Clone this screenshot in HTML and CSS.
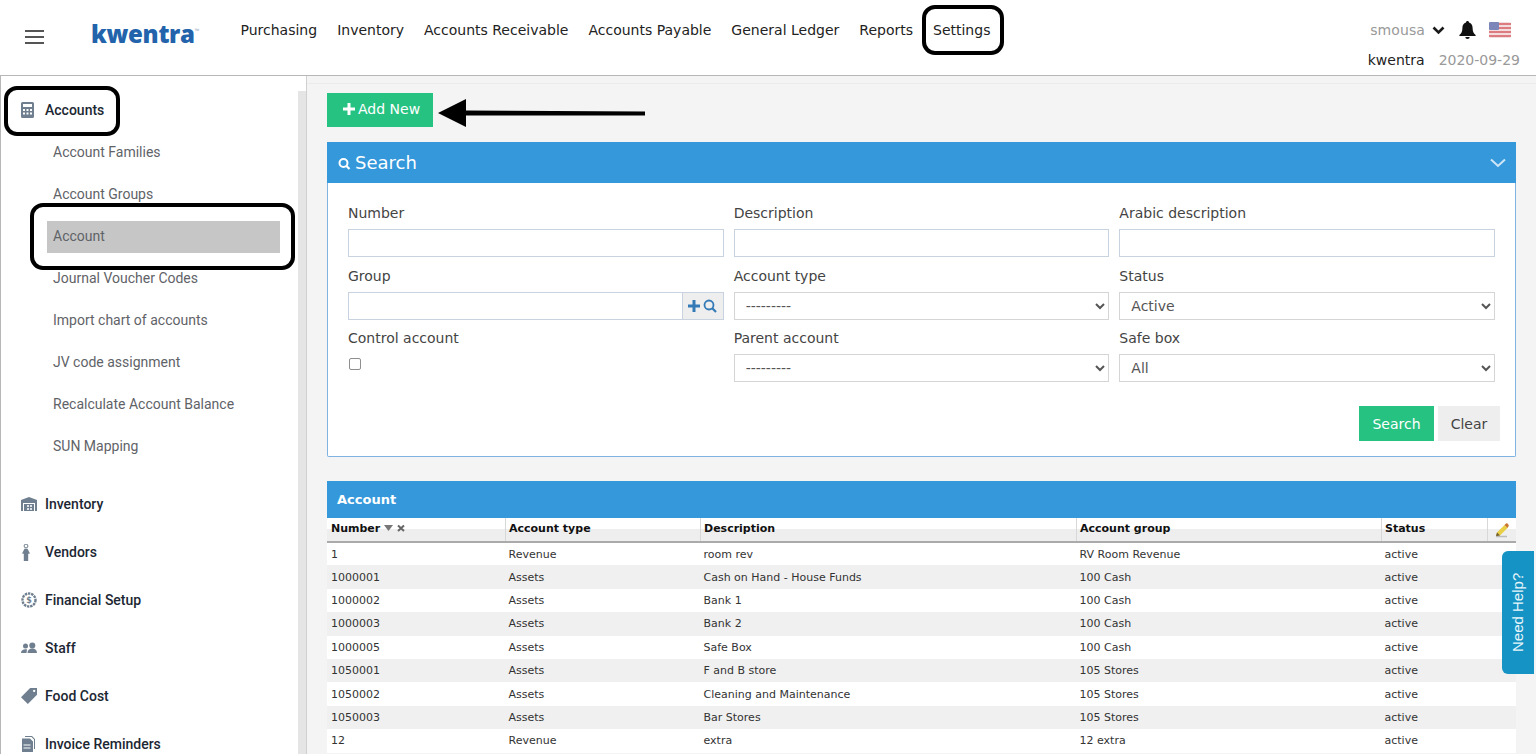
FILE: index.html
```html
<!DOCTYPE html>
<html lang="en">
<head>
    <meta charset="UTF-8">
    <title>Accounts</title>
    <link rel="stylesheet" href="styles.css">
</head>
<body>
    <!-- Top bar -->
    <header class="topbar">
        <div class="burger"><span></span><span></span><span></span></div>
        <div class="logo">kwentra<small>™</small></div>
        <nav class="topnav">
            <a>Purchasing</a>
            <a>Inventory</a>
            <a>Accounts Receivable</a>
            <a>Accounts Payable</a>
            <a>General Ledger</a>
            <a>Reports</a>
            <a>Settings</a>
        </nav>
        <div class="user">
            <div class="user-row">
                <span class="user-name">smousa</span>
                <svg class="user-caret" width="13" height="9" viewBox="0 0 13 9"><path d="M1.500 1.500 6.500 6.500 11.500 1.500" fill="none" stroke="#1a1a1a" stroke-width="2.600"/></svg>
                <svg class="user-bell" width="17" height="18" viewBox="0 0 17 18"><path d="M8.500 0C7.600 0 7 .6 7 1.500 4.600 2.200 3.400 4.200 3.400 7c0 3.500-1 5.300-3 7v1h16.200v-1c-2-1.700-3-3.500-3-7 0-2.800-1.200-4.800-3.600-5.500C10 .6 9.400 0 8.500 0ZM6.300 16a2.200 2 0 0 0 4.400 0Z" fill="#111"/></svg>
                <svg class="user-flag" width="22" height="16" viewBox="0 0 22 16">
                    <rect width="22" height="16" rx="2" fill="#f3dcdc"/>
                    <path d="M0 2h22M0 6h22M0 10h22M0 14h22" stroke="#dd7c80" stroke-width="1.800"/>
                    <rect width="10" height="8" rx="1" fill="#7d86b8"/>
                </svg>
            </div>
            <div class="user-row user-row-second">
                <span class="user-org">kwentra</span>
                <span class="user-date">2020-09-29</span>
            </div>
        </div>
    </header>

    <div class="layout">
        <!-- Left menu -->
        <aside class="sidebar">
            <div class="menu">
                <div class="menu-head">
                    <svg class="menu-icon" width="13" height="16" viewBox="0 0 13 16" preserveAspectRatio="xMinYMid"><path fill-rule="evenodd" d="M1.500 0h10A1.500 1.500 0 0 1 13 1.500v13a1.500 1.500 0 0 1-1.500 1.500h-10A1.500 1.500 0 0 1 0 14.500v-13A1.500 1.500 0 0 1 1.500 0ZM2 2v3h9V2ZM2 7v2h2V7Zm3.500 0v2h2V7ZM9 7v2h2V7ZM2 10.500v2h2v-2Zm3.500 0v2h2v-2Zm3.500 0v2h2v-2Z"/></svg>
                    <span>Accounts</span>
                </div>
                <a class="menu-link">Account Families</a>
                <a class="menu-link">Account Groups</a>
                <a class="menu-link active">Account</a>
                <a class="menu-link">Journal Voucher Codes</a>
                <a class="menu-link">Import chart of accounts</a>
                <a class="menu-link">JV code assignment</a>
                <a class="menu-link">Recalculate Account Balance</a>
                <a class="menu-link">SUN Mapping</a>

                <div class="menu-group">
                    <div class="menu-item">
                        <svg class="menu-icon" width="16" height="14" viewBox="0 0 16 14"><path fill-rule="evenodd" d="M8 0 16 3v11h-2V6H2v8H0V3ZM3 7h10v7H3Z"/><path d="M6 8h2v2H6Zm3 0h2v2H9Zm-3 3h2v2H6Zm3 0h2v2H9Z" fill="#dfe3e7"/></svg>
                        <span>Inventory</span>
                    </div>
                    <div class="menu-item">
                        <svg class="menu-icon" width="16" height="17" viewBox="0 0 16 17"><circle cx="5" cy="2" r="1.900" fill="none" stroke="#6f7f8f"/><path d="M3.500 4.800h3L9 9.500l-1.800.3V17H2.800V9.800L1 9.500Z"/></svg>
                        <span>Vendors</span>
                    </div>
                    <div class="menu-item">
                        <svg class="menu-icon" width="16" height="16" viewBox="0 0 16 16"><circle cx="8" cy="8" r="6.500" fill="none" stroke-width="2.400" stroke="#6f7f8f" stroke-dasharray="2.400 .8"/><circle cx="8" cy="8" r="4.800" fill="#fff"/><text x="8" y="11" text-anchor="middle" class="icon-dollar">$</text></svg>
                        <span>Financial Setup</span>
                    </div>
                    <div class="menu-item">
                        <svg class="menu-icon" width="16" height="12" viewBox="0 0 16 12"><circle cx="4.500" cy="4" r="2.500"/><circle cx="11.300" cy="3.500" r="3"/><path d="M0 11c0-2.500 2-3.700 4.500-3.700 1 0 1.500.2 1.500.2L5.500 11ZM6.500 11c0-3 2-4.500 4.800-4.500S16 8 16 11Z"/></svg>
                        <span>Staff</span>
                    </div>
                    <div class="menu-item">
                        <svg class="menu-icon" width="16" height="16" viewBox="1 1 14 14"><path fill-rule="evenodd" d="M9 1h6v6l-8 8-6-6ZM12.500 2.500a1 1 0 1 0 .01 0Z"/></svg>
                        <span>Food Cost</span>
                    </div>
                    <div class="menu-item">
                        <svg class="menu-icon" width="16" height="16" viewBox="0 0 16 16"><path d="M4 0h7l3 3v10h-1V3.500L10.500 1H4Z"/><path fill-rule="evenodd" d="M1 2.500h8l3 3V16H1Zm1.500 6v1h7v-1Zm0 3v1h7v-1Z"/></svg>
                        <span>Invoice Reminders</span>
                    </div>
                </div>
            </div>
            <div class="sidebar-track"></div>
        </aside>

        <main class="content">
            <button class="btn btn-green btn-add">
                <svg width="12" height="12" viewBox="0 0 12 12"><path d="M4.500 0h3v4.500H12v3H7.500V12h-3V7.500H0v-3h4.500Z" fill="#fff"/></svg>
                Add New
            </button>

            <!-- Search panel -->
            <section class="search-panel">
                <div class="search-head">
                    <svg class="search-icon" width="13" height="13" viewBox="0 0 13 13"><circle cx="5.500" cy="6" r="4" fill="none" stroke="#fff" stroke-width="2"/><path d="M8.500 9 11.500 12" stroke="#fff" stroke-width="2.200"/></svg>
                    <span class="search-title">Search</span>
                    <svg class="search-chevron" width="16" height="10" viewBox="0 0 16 10"><path d="M1 1.500 8 8l7-6.500" fill="none" stroke="#cfe6f7" stroke-width="2"/></svg>
                </div>
                <div class="search-body">
                    <div class="form-grid">
                        <div class="field">
                            <label>Number</label>
                            <input type="text">
                        </div>
                        <div class="field">
                            <label>Description</label>
                            <input type="text">
                        </div>
                        <div class="field">
                            <label>Arabic description</label>
                            <input type="text">
                        </div>
                        <div class="field">
                            <label>Group</label>
                            <div class="input-group">
                                <input type="text">
                                <span class="input-addon">
                                    <svg width="12" height="12" viewBox="0 0 12 12"><path d="M4.500 0h3v4.500H12v3H7.500V12h-3V7.500H0v-3h4.500Z" fill="#337ab7"/></svg>
                                    <svg width="14" height="14" viewBox="0 0 14 14"><circle cx="6" cy="6" r="4.500" fill="none" stroke="#337ab7" stroke-width="1.800"/><path d="M9.300 9.300 13 13" stroke="#337ab7" stroke-width="2.200"/></svg>
                                </span>
                            </div>
                        </div>
                        <div class="field">
                            <label>Account type</label>
                            <select><option>---------</option></select>
                        </div>
                        <div class="field">
                            <label>Status</label>
                            <select><option>Active</option></select>
                        </div>
                        <div class="field">
                            <label>Control account</label>
                            <div class="check-wrap"><input type="checkbox"></div>
                        </div>
                        <div class="field">
                            <label>Parent account</label>
                            <select><option>---------</option></select>
                        </div>
                        <div class="field">
                            <label>Safe box</label>
                            <select><option>All</option></select>
                        </div>
                    </div>
                    <div class="form-actions">
                        <button class="btn btn-green">Search</button>
                        <button class="btn btn-grey">Clear</button>
                    </div>
                </div>
            </section>

            <!-- Results -->
            <section class="results">
                <div class="results-head">Account</div>
                <table class="grid">
                    <thead>
                        <tr>
                            <th class="col-number">Number <svg width="22" height="8" viewBox="0 0 22 8"><path d="M0 1h9L4.500 7Z" fill="#777"/><path d="M14 1.500 20 7M20 1.500 14 7" stroke="#666" stroke-width="2"/></svg></th>
                            <th class="col-type">Account type</th>
                            <th class="col-desc">Description</th>
                            <th class="col-group">Account group</th>
                            <th class="col-status">Status</th>
                            <th class="col-edit">
                                <svg class="edit-icon" width="15" height="15" viewBox="0 0 15 15"><path d="M2 13.500h11" stroke="#bbb" stroke-width="1.500"/><path d="M3 9.500 10.500 2l3 3L6 12.500 2 13Z" fill="#e8cf45"/><path d="M10.500 2 12 .5a1.200 1.200 0 0 1 1.500 0l1 1.200a1.200 1.200 0 0 1 0 1.500L13.500 5Z" fill="#c9772f"/><path d="M3 9.500 2 13l4-.5Z" fill="#6d5a34"/></svg>
                            </th>
                        </tr>
                    </thead>
                    <tbody>
                        <tr><td>1</td><td>Revenue</td><td>room rev</td><td>RV Room Revenue</td><td>active</td><td></td></tr>
                        <tr><td>1000001</td><td>Assets</td><td>Cash on Hand - House Funds</td><td>100 Cash</td><td>active</td><td></td></tr>
                        <tr><td>1000002</td><td>Assets</td><td>Bank 1</td><td>100 Cash</td><td>active</td><td></td></tr>
                        <tr><td>1000003</td><td>Assets</td><td>Bank 2</td><td>100 Cash</td><td>active</td><td></td></tr>
                        <tr><td>1000005</td><td>Assets</td><td>Safe Box</td><td>100 Cash</td><td>active</td><td></td></tr>
                        <tr><td>1050001</td><td>Assets</td><td>F and B store</td><td>105 Stores</td><td>active</td><td></td></tr>
                        <tr><td>1050002</td><td>Assets</td><td>Cleaning and Maintenance</td><td>105 Stores</td><td>active</td><td></td></tr>
                        <tr><td>1050003</td><td>Assets</td><td>Bar Stores</td><td>105 Stores</td><td>active</td><td></td></tr>
                        <tr><td>12</td><td>Revenue</td><td>extra</td><td>12 extra</td><td>active</td><td></td></tr>
                    </tbody>
                </table>
            </section>
        </main>
    </div>

    <div class="help-tab">Need Help?</div>

    <!-- Annotations drawn over the screenshot -->
    <div class="mark mark-settings"></div>
    <div class="mark mark-accounts"></div>
    <div class="mark mark-account"></div>
    <svg class="mark-arrow" width="210" height="30" viewBox="0 0 210 30"><path d="M0 14 28 0v11.500L207 12.500v4L28 16.500V28Z" fill="#000"/></svg>
</body>
</html>
```

FILE: styles.css
```css
/* General */
html, body {
    margin: 0;
    padding: 0;
    height: 100%;
    overflow: hidden;
    background: #fff;
    font-family: "DejaVu Sans", sans-serif;
    font-size: 14px;
    color: #333;
}

/* Top bar */
.topbar {
    display: flex;
    height: 75px;
    background: #fff;
    border-bottom: 1px solid #b7b7b7;
}

.burger {
    display: flex;
    flex-direction: column;
    gap: 4px;
    width: 19px;
    margin: 30px 0 0 25px;
}

.burger span {
    display: block;
    height: 2px;
    background: #555;
}

.logo {
    width: 149px;
    margin: 16px 0 0 47px;
    font-family: "Open Sans", sans-serif;
    font-size: 24px;
    font-weight: 800;
    line-height: 36px;
    letter-spacing: -0.3px;
    color: #2263ab;
}

.logo small {
    position: relative;
    top: -10px;
    font-size: 6px;
    font-weight: 400;
    color: #9ab;
}

.topnav {
    display: flex;
    gap: 20px;
    padding: 21px 0 0 0.5px;
}

.topnav a {
    line-height: 18px;
    color: #222;
}

.user {
    margin-left: auto;
    padding: 21px 16px 0 0;
}

.user-row {
    display: flex;
    align-items: center;
    justify-content: flex-end;
    height: 18px;
    padding-right: 9px;
}

.user-row-second {
    margin-top: 12px;
    padding-right: 0;
}

.user-name {
    color: #999;
    letter-spacing: 0.1px;
}

.user-caret {
    margin-left: 7px;
}

.user-bell {
    margin-left: 14px;
}

.user-flag {
    margin-left: 13px;
}

.user-org {
    color: #222;
}

.user-date {
    margin-left: 14px;
    color: #999;
}

/* Page */
.layout {
    display: flex;
    height: calc(100% - 76px);
}

.sidebar {
    display: flex;
    flex: 0 0 307px;
    box-sizing: border-box;
    border-left: 1px solid #b7b7b7;
    border-right: 1px solid #d0d0d0;
    background: #fff;
    overflow: hidden;
    font-family: Roboto, sans-serif;
}

.menu {
    display: flex;
    flex: 1;
    flex-direction: column;
    padding-top: 14px;
}

.sidebar-track {
    flex: 0 0 8px;
    margin-top: 15px;
    background: #e5e5e5;
}

.menu-head, .menu-item {
    display: flex;
    flex-shrink: 0;
    align-items: center;
    font-weight: 500;
    color: #1c2733;
}

.menu-head {
    height: 40px;
    padding: 0 0 2px 20px;
}

.menu-item {
    height: 46px;
    padding: 0 0 2px 20px;
}

.menu-group {
    margin-top: 13px;
}

.menu-icon {
    flex: 0 0 16px;
    margin-right: 8px;
    fill: #6f7f8f;
}

.icon-dollar {
    font-family: "DejaVu Sans", sans-serif;
    font-size: 8px;
    font-weight: 700;
}

.menu-link {
    display: block;
    flex-shrink: 0;
    height: 32px;
    margin: 5px 18px 5px 46px;
    padding-left: 6px;
    line-height: 30px;
    color: #5f6368;
}

.menu-link.active {
    background: #c6c6c6;
}

/* Content */
.content {
    flex: 1;
    min-width: 0;
    box-sizing: border-box;
    padding: 17px 20px 0;
    background: linear-gradient(#f4f4f4 7px, #ebebeb 7px, #ebebeb 8px, #f4f4f4 8px);
    overflow: hidden;
}

.btn {
    border: none;
    font-family: "DejaVu Sans", sans-serif;
    font-size: 14px;
    cursor: pointer;
}

.btn-green {
    background: #26c281;
    color: #fff;
}

.btn-grey {
    background: #eee;
    color: #444;
}

.btn-add {
    display: flex;
    align-items: center;
    gap: 3px;
    width: 106px;
    height: 34px;
    padding: 0 0 2px 16px;
}

.search-panel {
    margin-top: 15px;
    background: #fff;
    border: 1px solid #7fb4e2;
    border-top: none;
    border-radius: 0 0 2px 2px;
}

.search-head {
    display: flex;
    align-items: center;
    height: 41px;
    margin: 0 -1px;
    padding-left: 11px;
    background: #3498db;
    color: #fff;
}

.search-icon {
    margin-top: 2px;
}

.search-title {
    margin-left: 4px;
    font-size: 18px;
}

.search-chevron {
    margin-left: auto;
    margin-right: 10px;
}

.search-body {
    padding: 20px 20px 15px;
}

.form-grid {
    display: grid;
    grid-template-columns: repeat(3, 1fr);
    gap: 8.5px 10px;
}

.field label {
    display: block;
    height: 21px;
    margin-bottom: 5px;
    line-height: 21px;
    color: #444;
}

.field input[type="text"], .field select {
    display: block;
    width: 100%;
    height: 28px;
    box-sizing: border-box;
    padding: 0 7px;
    border: 1px solid #c9d3e0;
    background: #fff;
    font-family: "DejaVu Sans", sans-serif;
    font-size: 14px;
    color: #555;
    border-radius: 0;
}

.field select {
    padding: 0 3px 0 7px;
    border-color: #d5d5d5;
}

.input-group {
    display: flex;
}

.input-group input[type="text"] {
    flex: 1;
    min-width: 0;
    border-right: none;
}

.input-addon {
    display: flex;
    flex: 0 0 42px;
    align-items: center;
    justify-content: center;
    gap: 3px;
    height: 28px;
    box-sizing: border-box;
    border: 1px solid #c9d3e0;
    background: #eee;
}

.check-wrap input {
    display: block;
    width: 12px;
    height: 12px;
    margin: 9px 0 0 1px;
    appearance: none;
    border: 1px solid #8f8f8f;
    border-radius: 2px;
    background: #fff;
}

.form-actions {
    display: flex;
    justify-content: flex-end;
    gap: 4px;
    margin: 24px -5px 0 0;
}

.form-actions .btn {
    height: 35px;
}

.form-actions .btn-green {
    width: 75px;
}

.form-actions .btn-grey {
    width: 62px;
}

/* Results table */
.results {
    margin-top: 24px;
}

.results-head {
    height: 37px;
    padding-left: 10px;
    background: #3498db;
    color: #fff;
    font-size: 13px;
    font-weight: 700;
    line-height: 37px;
}

.grid {
    width: 100%;
    table-layout: fixed;
    border-collapse: collapse;
    font-size: 11px;
    color: #333;
}

.grid th {
    height: 24px;
    box-sizing: border-box;
    padding: 0 4px 2px 3.5px;
    border-right: 1px solid #d8d8d8;
    border-bottom: 2px solid #aaa;
    background: linear-gradient(#fff 50%, #eee 50%);
    color: #111;
    text-align: left;
    font-weight: 700;
}

.grid th:first-child, .grid td:first-child {
    padding-left: 4px;
}

.grid th:last-child {
    border-right: none;
}

.col-number { width: 178px; }
.col-type { width: 195px; }
.col-desc { width: 376px; }
.col-group { width: 305px; }
.col-status { width: 106px; }

.col-edit {
    text-align: center;
}

.edit-icon {
    display: block;
    margin: 3px auto 0;
}

.grid td {
    height: 23.4px;
    padding: 0 4px 0 3.5px;
    box-sizing: border-box;
    background: #fff;
}

.grid tbody tr:nth-child(even) td {
    background: #f0f0f0;
}

/* Need help tab */
.help-tab {
    position: absolute;
    top: 551px;
    left: 1502px;
    width: 32px;
    height: 123px;
    background: #1493c4;
    border-radius: 0 6px 6px 0;
    color: #e8f6fb;
    font-family: "Liberation Sans", sans-serif;
    font-size: 15px;
    line-height: 32px;
    text-align: center;
    writing-mode: vertical-rl;
    transform: rotate(180deg);
}

/* Annotations */
.mark {
    position: absolute;
    box-sizing: border-box;
    border: 4px solid #000;
    border-radius: 13px;
}

.mark-settings {
    top: 5px;
    left: 922px;
    width: 82px;
    height: 50px;
}

.mark-accounts {
    top: 86px;
    left: 4px;
    width: 116px;
    height: 50px;
}

.mark-account {
    top: 203px;
    left: 30px;
    width: 265px;
    height: 67px;
}

.mark-arrow {
    position: absolute;
    top: 99px;
    left: 438px;
}
```
